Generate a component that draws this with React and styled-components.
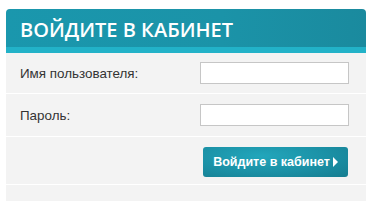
import styled, { createGlobalStyle } from "styled-components";

const GlobalStyle = createGlobalStyle`
  body {
    margin: 0;
    background: #fff;
    font-family: "Liberation Sans", Arial, sans-serif;
  }
`;

const Page = styled.div`
  padding: 9px 5px 0 6px;
`;

const Card = styled.div`
  background: #f3f3f3;
  border-radius: 4px 4px 0 0;
  overflow: hidden;
`;

const Header = styled.div`
  height: 38px;
  padding-left: 14px;
  display: flex;
  align-items: center;
  background: linear-gradient(90deg, #1a97ad 0%, #1b93a8 60%, #1a8a9e 100%);
  border-bottom: 6px solid #22b2c8;
`;

const Title = styled.h1`
  margin: 2px 0 0;
  font-family: "Open Sans", "Liberation Sans", sans-serif;
  font-size: 20px;
  font-weight: 600;
  color: #fff;
`;

const Row = styled.div`
  height: ${(p) => p.h}px;
  display: flex;
  align-items: center;
  justify-content: space-between;
  padding: 0 16px 0 14px;
  border-bottom: 1px solid #fff;
`;

const Label = styled.label`
  font-size: 13.4px;
  color: #333;
`;

const Input = styled.input`
  width: 149px;
  height: 22px;
  box-sizing: border-box;
  border: 1px solid #c6c6c6;
  background: #fff;
  margin: 0;
  margin-right: 1px;
`;

const Actions = styled(Row)`
  justify-content: flex-end;
  padding-right: 18px;
`;

const Submit = styled.button`
  width: 145px;
  height: 30px;
  border: none;
  border-radius: 3px;
  background: radial-gradient(ellipse at 40% 30%, #22a6bb 0%, #1a8ea3 60%, #167d90 100%);
  color: #fff;
  font-family: "Liberation Sans", Arial, sans-serif;
  font-size: 12.5px;
  font-weight: bold;
  display: flex;
  align-items: center;
  justify-content: center;
  gap: 3px;
  margin-top: 2px;
  cursor: pointer;
`;

const Arrow = styled.span`
  width: 0;
  height: 0;
  border-top: 5px solid transparent;
  border-bottom: 5px solid transparent;
  border-left: 5px solid #fff;
`;

const Footer = styled.div`
  height: 16px;
`;

export default function App() {
  return (
    <>
      <GlobalStyle />
      <Page>
        <Card>
          <Header>
            <Title>ВОЙДИТЕ В КАБИНЕТ</Title>
          </Header>
          <Row h={40}>
            <Label>Имя пользователя:</Label>
            <Input type="text" />
          </Row>
          <Row h={42}>
            <Label>Пароль:</Label>
            <Input type="password" />
          </Row>
          <Actions h={47}>
            <Submit>
              Войдите в кабинет
              <Arrow />
            </Submit>
          </Actions>
          <Footer />
        </Card>
      </Page>
    </>
  );
}
